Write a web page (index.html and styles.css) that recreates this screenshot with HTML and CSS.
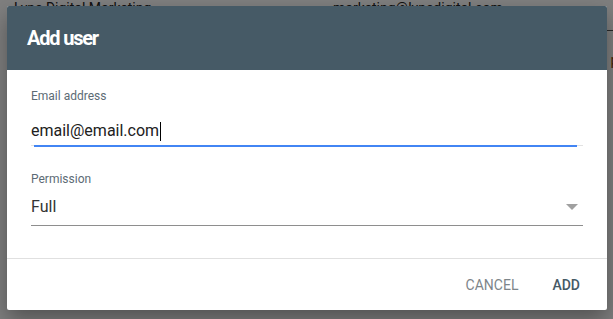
FILE: index.html
```html
<!DOCTYPE html>
<html lang="en">
<head>
  <meta charset="UTF-8" />
  <meta name="viewport" content="width=device-width, initial-scale=1.0" />
  <title>Add user</title>
  <link rel="stylesheet" href="styles.css">
</head>
<body>
  <!-- page behind the modal -->
  <div class="page">
    <div class="page-row">
      <span class="page-name">Lyne Digital Marketing</span>
      <span class="page-mail">marketing@lynedigital.com</span>
    </div>
    <div class="page-row second">
      <span class="page-link">p</span>
    </div>
  </div>

  <div class="backdrop"></div>

  <div class="dialog">
    <div class="dialog-header">Add user</div>

    <div class="dialog-body">
      <div class="field">
        <label class="field-label">Email address</label>
        <div class="field-input focused">
          <span class="field-value">email@email.com</span><span class="caret"></span>
        </div>
      </div>

      <div class="field select">
        <label class="field-label">Permission</label>
        <div class="field-input">
          <span class="field-value">Full</span>
          <span class="select-arrow"></span>
        </div>
      </div>
    </div>

    <div class="dialog-footer">
      <button class="btn btn-cancel">Cancel</button>
      <button class="btn btn-add">Add</button>
    </div>
  </div>
</body>
</html>
```

FILE: styles.css
```css
* { box-sizing: border-box; margin: 0; padding: 0; }
body {
  background: #fff;
  font-family: Roboto, "Liberation Sans", Arial, sans-serif;
  width: 613px;
  height: 319px;
  overflow: hidden;
  position: relative;
}

/* page behind */
.page {
  padding-left: 14px;
}
.page-row {
  display: flex;
  height: 32px;
  margin-top: -1px;
  border-bottom: 1px solid #555;
  font-size: 14px;
  line-height: 18px;
  color: #222;
}
.page-name {
  width: 319px;
}
.page-row.second {
  margin-top: 0;
  border-bottom: none;
  justify-content: flex-end;
  padding-top: 20px;
}
.page-link {
  color: #8a4a10;
  font-size: 15px;
  margin-right: -6px;
}

.backdrop {
  position: absolute;
  inset: 0;
  background: rgba(0, 0, 0, 0.5);
}

/* dialog */
.dialog {
  position: absolute;
  top: 6px;
  left: 7px;
  width: 600px;
  background: #fff;
  border-radius: 2px;
  box-shadow: 0 10px 22px rgba(0, 0, 0, 0.35);
}
.dialog-header {
  height: 64px;
  background: #465a66;
  color: #fff;
  font-size: 20px;
  font-weight: 700;
  letter-spacing: -1.2px;
  padding: 20px 20px 0;
  line-height: 24px;
  border-radius: 2px 2px 0 0;
}
.dialog-body {
  padding: 18px 24px 32px;
  border-bottom: 1px solid #e0e0e0;
}
.field-label {
  display: block;
  font-size: 12px;
  line-height: 16px;
  color: #5c6b75;
}
.field-input {
  position: relative;
  display: flex;
  align-items: center;
  margin-top: 17px;
  padding-bottom: 4px;
  border-bottom: 1px solid #e2e2e2;
  font-size: 16px;
  line-height: 20px;
  color: #212121;
}
.field-input.focused::after {
  content: "";
  position: absolute;
  left: 3px;
  right: 6px;
  bottom: -2px;
  height: 2px;
  background: #4285f4;
}
.caret {
  display: inline-block;
  width: 1px;
  height: 19px;
  background: #000;
  margin-left: 1px;
}

.field.select {
  margin-top: 25px;
}
.field.select .field-input {
  margin-top: 10px;
  padding-bottom: 8px;
  border-bottom-color: #8e8e8e;
  color: #333;
}
.select-arrow {
  margin-left: auto;
  margin-right: 5px;
  width: 0;
  height: 0;
  border-left: 6px solid transparent;
  border-right: 6px solid transparent;
  border-top: 6px solid #a0a0a0;
}

.dialog-footer {
  display: flex;
  justify-content: flex-end;
  gap: 2px;
  padding: 8px 11px 7px;
}
.btn {
  background: none;
  border: none;
  font-family: inherit;
  font-size: 14px;
  font-weight: 500;
  text-transform: uppercase;
  height: 36px;
  line-height: 36px;
  padding: 0 16px;
}
.btn-cancel {
  color: #7d858a;
  font-weight: 400;
}
.btn-add {
  color: #465a66;
}
```
